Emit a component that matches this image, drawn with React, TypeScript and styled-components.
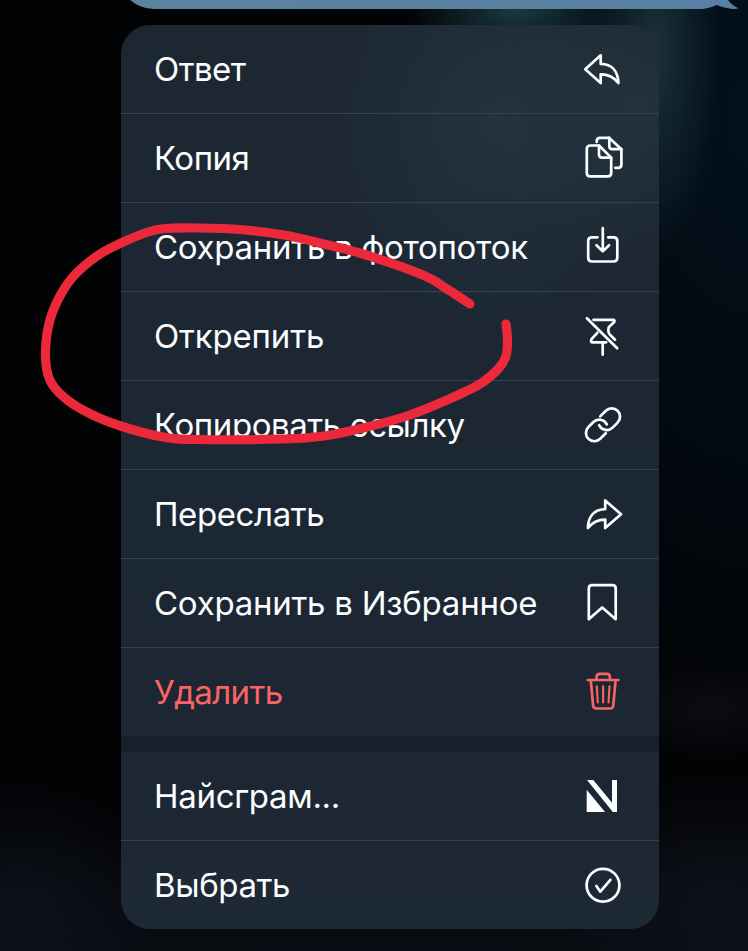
import React, { Fragment } from 'react'
import styled, { createGlobalStyle } from 'styled-components'

interface IMenuItem {
    label: string;
    icon: React.ReactNode;
    spacing: number;
    danger?: boolean;
}

const GlobalStyle = createGlobalStyle`
    body {
        margin: 0;
        background: #020305;
        overflow: hidden;
    }
`;

const Screen = styled.div`
    position: relative;
    box-sizing: border-box;
    width: 748px;
    height: 951px;
    overflow: hidden;
    font-family: Inter, "Liberation Sans", sans-serif;
    background:
        radial-gradient(ellipse 65px 210px at 655px 50px, rgba(34, 62, 72, 0.75), rgba(34, 62, 72, 0) 100%),
        radial-gradient(ellipse 110px 50px at 515px 12px, rgba(32, 68, 76, 0.8), rgba(32, 68, 76, 0) 100%),
        radial-gradient(ellipse 150px 130px at 20px 910px, rgba(15, 20, 29, 0.8), rgba(15, 20, 29, 0) 100%),
        radial-gradient(ellipse 180px 130px at 720px 900px, rgba(15, 19, 27, 0.85), rgba(15, 19, 27, 0) 100%),
        radial-gradient(ellipse 100px 50px at 710px 710px, rgba(12, 14, 18, 0.9), rgba(12, 14, 18, 0) 100%),
        radial-gradient(ellipse 330px 620px at 748px 120px, #03111d, rgba(3, 14, 25, 0) 100%),
        linear-gradient(#020305 0, #020305 830px, #090c12 951px);
`;

const Header = styled.div`
    position: relative;
    height: 25px;
    overflow: hidden;
`;

const Bubble = styled.div`
    width: 618px;
    height: 82px;
    margin: -73px 0 0 118px;
    border-radius: 36px;
    background: linear-gradient(90deg, #5b859f, #5a81a1 60%, #5780a4);
`;

const BubbleTail = styled.svg`
    position: absolute;
    top: 0;
    left: 700px;
    width: 40px;
    height: 10px;
`;

const Menu = styled.div`
    width: 538px;
    margin-left: 121px;
    border-radius: 29px;
    overflow: hidden;
    background:
        radial-gradient(ellipse 170px 160px at 520px 80px, rgba(37, 54, 66, 0.7), rgba(37, 54, 66, 0) 100%),
        radial-gradient(ellipse 170px 210px at 370px 100px, rgba(35, 55, 67, 0.75), rgba(35, 55, 67, 0) 100%),
        linear-gradient(#1d2732 0, #1c2734 500px, #1d2733 750px, #1e2936 100%);
`;

const Row = styled.div<{ $danger?: boolean }>`
    display: flex;
    align-items: center;
    justify-content: space-between;
    box-sizing: border-box;
    height: 88px;
    padding: 0 32px 0 33px;
    color: ${props => props.$danger ? "#fa6464" : "#fbfdff"};
`;

const Label = styled.span<{ $spacing: number }>`
    font-size: 33px;
    line-height: 40px;
    letter-spacing: ${props => props.$spacing}px;
    white-space: nowrap;
`;

const Divider = styled.div`
    height: 1px;
    background: #35414d;
`;

const SectionGap = styled.div`
    height: 16px;
    background: #16202b;
`;

const IconBox = styled.svg`
    flex: none;
    width: 48px;
    height: 48px;
    fill: none;
    stroke: currentColor;
    stroke-width: 2.7;
    stroke-linecap: round;
    stroke-linejoin: round;
`;

const Marker = styled.svg`
    position: absolute;
    top: 0;
    left: 0;
    width: 748px;
    height: 951px;
    pointer-events: none;
`;

const Icon: React.FC<{ children: React.ReactNode }> = ({ children }) => (
    <IconBox viewBox="0 0 48 48">{children}</IconBox>
)

const mainItems: IMenuItem[] = [
    {
        label: "Ответ",
        spacing: -0.55,
        icon: <path d="M21.7 10.3 6.2 24.2 21.7 38V29.3C29.5 29.3 34.5 31.5 39.4 38 39 26.5 33 19 21.7 18.9Z" />
    },
    {
        label: "Копия",
        spacing: -0.5,
        icon: <Fragment>
            <path d="M20 11.5H11.2Q7.8 11.5 7.8 15V39Q7.8 42.4 11.2 42.4H28.8Q32.2 42.4 32.2 39V23.6Z" />
            <path d="M20 11.5V20.5Q20 23.6 23 23.6H32.2" />
            <path d="M17.7 8V7.3Q17.7 3.9 21 3.9H30.3L42.4 15.2V30.4Q42.4 33.8 39 33.8H36.2" />
            <path d="M30.3 3.9V12Q30.3 15.2 33.5 15.2H42.4" />
        </Fragment>
    },
    {
        label: "Сохранить в фотопоток",
        spacing: -0.28,
        icon: <Fragment>
            <path d="M18.5 14.3H13Q9.2 14.3 9.2 18V34.8Q9.2 38.5 13 38.5H34.5Q38.3 38.5 38.3 34.8V18Q38.3 14.3 34.5 14.3H29.2" />
            <path d="M23.8 5V28M17.5 22.3 23.8 28.4 30.1 22.3" />
        </Fragment>
    },
    {
        label: "Открепить",
        spacing: -0.17,
        icon: <Fragment>
            <path d="M7.9 6.2 38.2 36.3" />
            <path d="M14.5 7.8H34.5Q36.3 8.4 35 10.2L30.4 14.4Q29.4 15.3 29.4 17V19Q29.4 21 30.8 22.5L36 27.7" />
            <path d="M18.3 20.8 12.7 26.8Q11.3 30.3 13 30.3H27.2M23.7 30.5V42.7" />
        </Fragment>
    },
    {
        label: "Копировать ссылку",
        spacing: -0.42,
        icon: <Fragment>
            <path d="M21.2 15.4 26.8 9.8A8.3 8.3 0 0 1 38.6 21.6L33.6 26.6A8.3 8.3 0 0 1 20.2 24.2" />
            <path d="M26.8 32.2 21.2 37.8A8.3 8.3 0 0 1 9.4 26L14.4 21A8.3 8.3 0 0 1 27.8 23.4" />
        </Fragment>
    },
    {
        label: "Переслать",
        spacing: -0.4,
        icon: <path d="M26.2 10.4 42 24.3 26.2 38V29.6C18.5 29.5 13.8 31.8 8.9 38 9.2 26.5 15 19.4 26.2 19.1Z" />
    },
    {
        label: "Сохранить в Избранное",
        spacing: -0.26,
        icon: <path d="M9.8 40.2V9.5Q9.8 6.2 13 6.2H33.5Q36.7 6.2 36.7 9.5V40.2L23.2 28.4Z" />
    },
    {
        label: "Удалить",
        spacing: -0.6,
        danger: true,
        icon: <Fragment>
            <path d="M8.8 12H39.5M17.6 11.5V9Q17.6 5.8 20.8 5.8H27.7Q30.9 5.8 30.9 9V11.5" />
            <path d="M11.8 12.5 14.1 37.4Q14.4 40.5 17.4 40.5H31Q34 40.5 34.3 37.4L36.6 12.5" />
            <path d="M17.8 18.3 18.8 34.5M24.1 18.3V34.5M30.5 18.3 29.5 34.5" strokeWidth="2.1" />
        </Fragment>
    }
]

const extraItems: IMenuItem[] = [
    {
        label: "Найсграм...",
        spacing: -0.3,
        icon: <g fill="currentColor" stroke="none">
            <path d="M7.7 17.8 26 40H7.7Z" />
            <path d="M8 8H14.3L33 30.7V8H38V40H33.8Z" />
        </g>
    },
    {
        label: "Выбрать",
        spacing: -0.38,
        icon: <Fragment>
            <circle cx="24" cy="24.2" r="16.4" />
            <path d="M17.4 25 21.3 30.7 31.4 18.8" />
        </Fragment>
    }
]

const markerPoints = [
    [470, 304], [447, 289], [423, 275], [363, 254], [320, 243], [284, 235], [240, 229.5], [197, 228],
    [165, 228.5], [148, 232], [121, 243], [97, 256], [72, 278], [55, 306], [47, 334], [46, 364],
    [52, 384], [70, 402], [97, 417], [127, 428], [163, 437], [197, 439.5], [284, 439], [324, 436],
    [363, 428], [407, 416], [447, 400], [480, 384], [499, 368], [506, 356], [507.5, 340], [506, 324]
]

// smooth curve through every point of the hand drawn line
const smoothPath = (points: number[][]) => {
    let d = `M${points[0].join(" ")}`;
    for (let i = 0; i < points.length - 1; i++) {
        const before = points[i - 1] || points[i];
        const from = points[i];
        const to = points[i + 1];
        const after = points[i + 2] || to;
        d += `C${from[0] + (to[0] - before[0]) / 6} ${from[1] + (to[1] - before[1]) / 6}`;
        d += ` ${to[0] - (after[0] - from[0]) / 6} ${to[1] - (after[1] - from[1]) / 6} ${to[0]} ${to[1]}`;
    }
    return d;
}

const MenuSection: React.FC<{ items: IMenuItem[] }> = ({ items }) => (
    <Fragment>
        {items.map((item, index) => (
            <Fragment key={item.label}>
                {index > 0 ? <Divider /> : null}
                <Row $danger={item.danger}>
                    <Label $spacing={item.spacing}>{item.label}</Label>
                    <Icon>{item.icon}</Icon>
                </Row>
            </Fragment>
        ))}
    </Fragment>
)

const App: React.FC = () => {
    return (
        <Screen>
            <GlobalStyle />
            <Header>
                <Bubble />
                <BubbleTail viewBox="0 0 40 10">
                    <path d="M0 0H28Q32 5.5 38.5 8.3 36 9.4 31 8.7 22 7.8 15 4.2 10 8 0 9Z" fill="#5780a4" />
                </BubbleTail>
            </Header>
            <Menu>
                <MenuSection items={mainItems} />
                <SectionGap />
                <MenuSection items={extraItems} />
            </Menu>
            <Marker viewBox="0 0 748 951">
                <path d={smoothPath(markerPoints)} fill="none" stroke="#ec293b" strokeWidth="9.2" strokeLinecap="round" strokeLinejoin="round" />
            </Marker>
        </Screen>
    )
}

export default App;
